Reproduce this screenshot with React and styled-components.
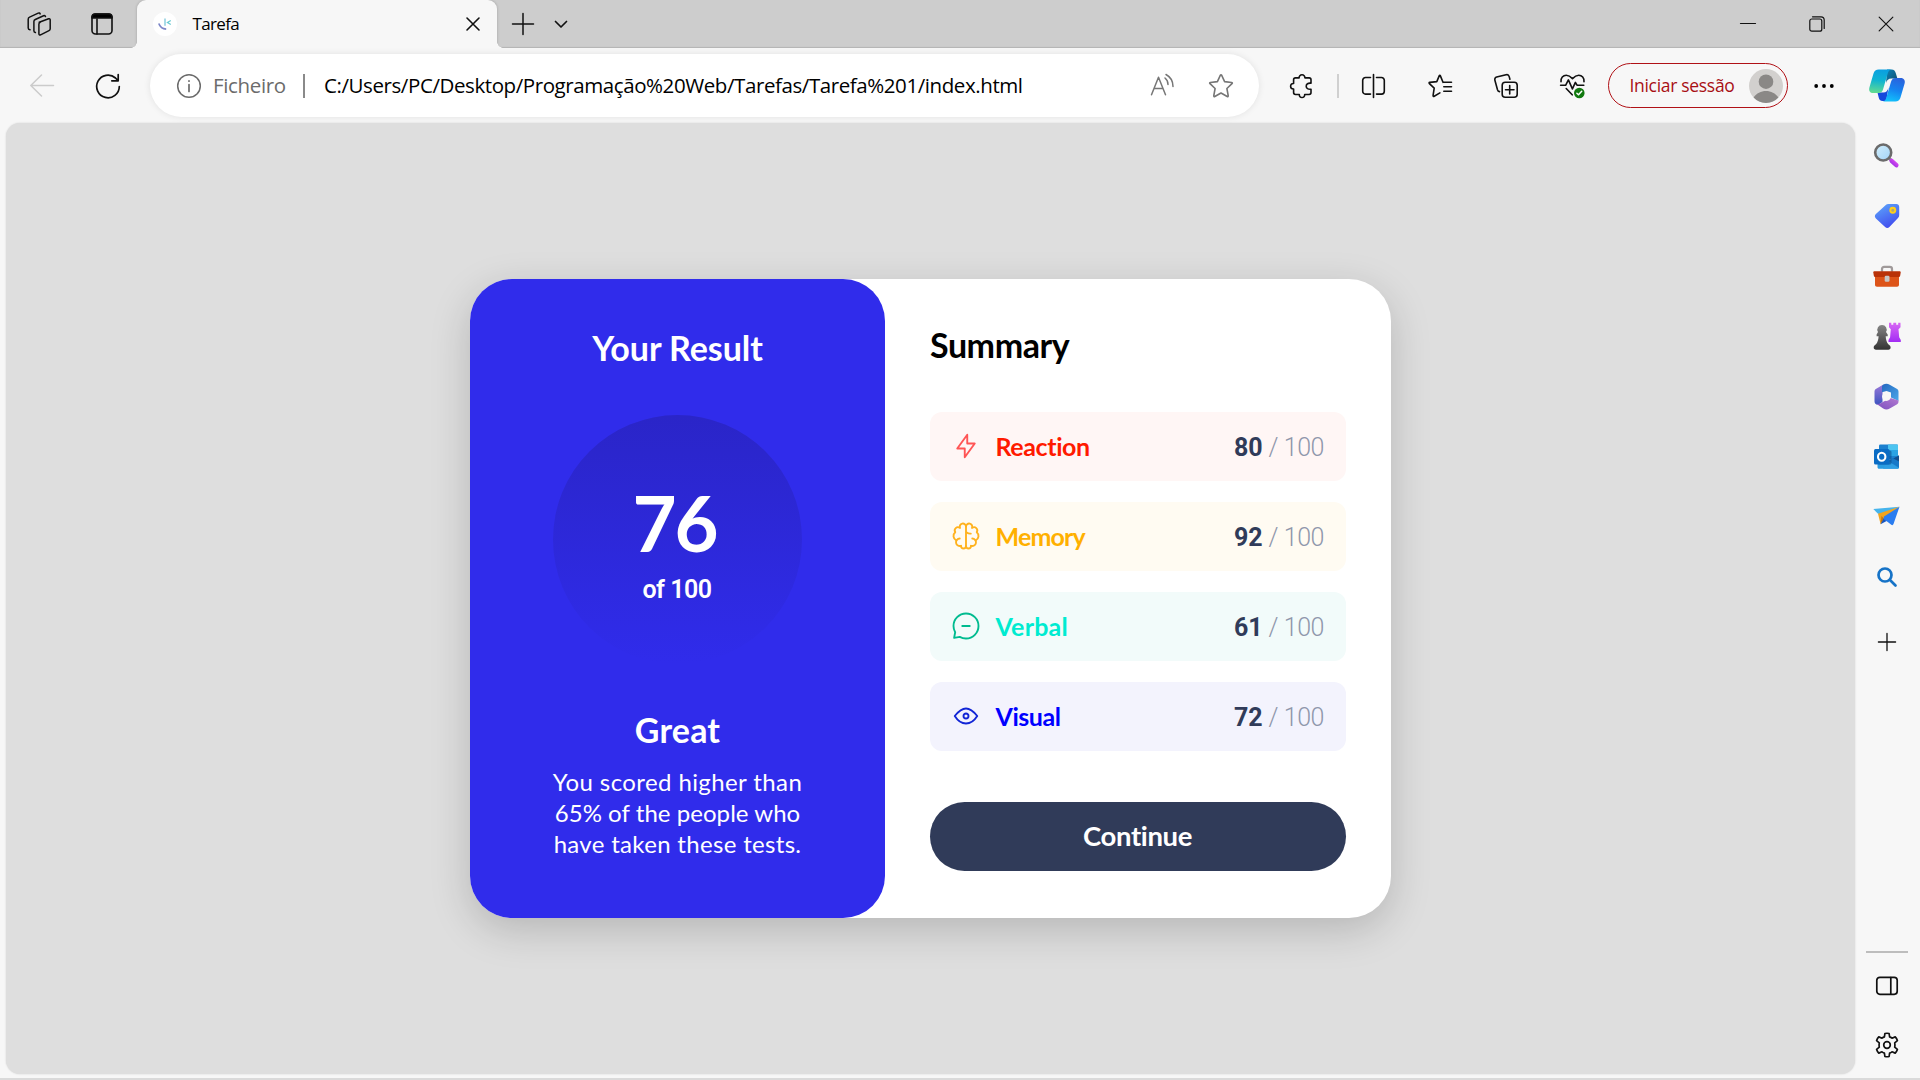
import React from 'react';
import styled, { createGlobalStyle } from 'styled-components';

const GlobalStyle = createGlobalStyle`
  *, *::before, *::after { box-sizing: border-box; }
  body { margin: 0; background: #f7f7f7; overflow: hidden; }
  h1, h2, p, ul { margin: 0; padding: 0; }
  svg { display: block; flex: none; overflow: visible; }
`;

const Browser = styled.div`
  width: 1920px;
  height: 1080px;
  display: flex;
  flex-direction: column;
  background: #f7f7f7;
  border-bottom: 2px solid #dadada;
  font-family: 'Open Sans', 'Noto Sans', sans-serif;
  color: #000;
`;

/* ---------- tab strip ---------- */

const TabStrip = styled.header`
  height: 48px;
  flex: none;
  display: flex;
  align-items: center;
  padding-left: 7.5px;
  background: #cdcdcd;
  box-shadow: inset 0 -1px 1px #b4b4b4;
`;

const Slot = styled.div`
  width: ${(p) => p.$w}px;
  flex: none;
  display: flex;
  justify-content: center;
  align-items: center;
  padding-bottom: ${(p) => p.$lift || 0}px;
`;

const Tab = styled.div`
  position: relative;
  width: 360px;
  height: 48px;
  margin: 0 7px 0 3px;
  padding: 0 16.5px 0 16px;
  display: flex;
  align-items: center;
  background: #f7f7f7;
  border-radius: 9px 9px 0 0;
  box-shadow: 0 0 3px rgba(0, 0, 0, 0.22);
  clip-path: inset(0 -7px 0 -7px);

  &::before,
  &::after {
    content: '';
    position: absolute;
    bottom: 0;
    width: 6px;
    height: 6px;
  }
  &::before {
    left: -6px;
    background: radial-gradient(circle at 0 0, transparent 5.5px, #f7f7f7 6px);
  }
  &::after {
    right: -6px;
    background: radial-gradient(circle at 100% 0, transparent 5.5px, #f7f7f7 6px);
  }
`;

const Favicon = styled.span`
  width: 24px;
  height: 24px;
  margin-right: 16px;
  border-radius: 50%;
  background: #fff;
`;

const TabTitle = styled.span`
  flex: 1;
  padding-bottom: 2px;
  font-size: 17px;
  letter-spacing: -0.65px;
`;

const Spacer = styled.div`
  flex: 1;
`;

/* ---------- toolbar ---------- */

const Toolbar = styled.nav`
  height: 74px;
  flex: none;
  display: flex;
  align-items: center;
  padding: 1px 0 0 9px;
`;

const AddressBar = styled.div`
  width: 1109px;
  height: 63px;
  margin: 0 9px;
  padding: 0 26px 0 27px;
  display: flex;
  align-items: center;
  border-radius: 32px;
  background: #fff;
  box-shadow: 0 0 7px rgba(0, 0, 0, 0.09);
  font-size: 20.5px;
  line-height: 30px;
`;

const Scheme = styled.span`
  width: 89px;
  margin-left: 12px;
  margin-right: 1px;
  padding-bottom: 2px;
  color: #6b6b6b;
  letter-spacing: -0.35px;
`;

const Separator = styled.span`
  width: 2px;
  height: 24px;
  flex: none;
  margin-right: ${(p) => p.$after}px;
  margin-left: ${(p) => p.$before || 0}px;
  background: ${(p) => p.$color};
`;

const Url = styled.span`
  flex: 1;
  padding-bottom: 2px;
  letter-spacing: -0.415px;
  white-space: nowrap;
`;

const AddressActions = styled.div`
  display: flex;
  gap: 34px;
`;

const SignIn = styled.div`
  width: 180px;
  height: 45px;
  margin: 0 3px;
  padding: 0 4px 0 20.5px;
  display: flex;
  align-items: center;
  justify-content: space-between;
  border: 1.5px solid #b01116;
  border-radius: 23px;
  color: #a80f14;
  font-size: 17.5px;
  letter-spacing: -0.31px;
  white-space: nowrap;
`;

const SignInLabel = styled.span`
  padding-bottom: 1px;
`;

/* ---------- body ---------- */

const Body = styled.div`
  flex: 1;
  min-height: 0;
  display: flex;
  padding: 1px 0 0 6px;
`;

const Viewport = styled.main`
  width: 1848.5px;
  height: 951px;
  flex: none;
  padding: 156px 0 0 464px;
  border-radius: 14px;
  background: #dedede;
  box-shadow: 0 0 2px rgba(0, 0, 0, 0.16);
`;

const Sidebar = styled.aside`
  width: 64px;
  display: flex;
  flex-direction: column;
  align-items: center;
  padding: 2.8px 0 3px 0;
`;

const SideItem = styled.div`
  width: 63px;
  height: ${(p) => p.$h || 60.1}px;
  margin-top: ${(p) => p.$top || 0}px;
  flex: none;
  display: flex;
  align-items: center;
  justify-content: center;
`;

const SideRule = styled.div`
  width: 42px;
  height: 2px;
  margin: auto 0 3px;
  background: #bdbdbd;
`;

/* ---------- result card ---------- */

const Card = styled.section`
  width: 921px;
  height: 639px;
  display: flex;
  border-radius: 42px;
  background: #fff;
  box-shadow: 0 12px 40px rgba(0, 0, 0, 0.18);
  font-family: Lato, sans-serif;
`;

const ResultPane = styled.div`
  width: 415px;
  padding-top: 48px;
  display: flex;
  flex-direction: column;
  align-items: center;
  border-radius: 42px;
  background: #302ceb;
  color: #fff;
`;

const Heading = styled.h1`
  font-size: 34px;
  line-height: 41px;
  font-weight: 700;
  letter-spacing: ${(p) => p.$track || 0}px;
`;

const ScoreCircle = styled.div`
  width: 249px;
  height: 249px;
  margin: 47px 0 45px;
  padding-top: 70px;
  display: flex;
  flex-direction: column;
  align-items: center;
  border-radius: 50%;
  background: linear-gradient(#2a25c8, #302ceb);
`;

const BigScore = styled.strong`
  padding-right: 6px;
  font-size: 76px;
  line-height: 76px;
  font-weight: 700;
  letter-spacing: -2px;
`;

const OutOf = styled.span`
  margin-top: 14px;
  padding-right: 1px;
  font: 600 25px/30px Roboto, sans-serif;
  letter-spacing: -0.5px;
`;

const Verdict = styled.p`
  margin-top: 16px;
  font-size: 24px;
  line-height: 31px;
  text-align: center;
`;

const Line = styled.span`
  display: block;
  letter-spacing: ${(p) => p.$track}px;
`;

const SummaryPane = styled.div`
  width: 416px;
  margin-left: 45px;
  padding-top: 45px;
`;

const Rows = styled.ul`
  margin-top: 47px;
  display: flex;
  flex-direction: column;
  gap: 21px;
  list-style: none;
`;

const Row = styled.li`
  height: 69px;
  padding: 0 22px 0 21px;
  display: flex;
  align-items: center;
  border-radius: 12px;
  background: ${(p) => p.$bg};

  svg {
    margin-bottom: 1px;
  }
`;

const RowLabel = styled.span`
  flex: 1;
  margin-left: 14.5px;
  padding-bottom: 1px;
  font-size: 25px;
  line-height: 30px;
  font-weight: 700;
  font-variant-ligatures: none;
  letter-spacing: ${(p) => p.$track}px;
  color: ${(p) => p.$color};
`;

const RowScore = styled.span`
  padding-top: 3px;
  font: 300 25px/30px Roboto, sans-serif;
  letter-spacing: -0.45px;
  color: #8f97ab;

  b {
    margin-right: 6px;
    font-weight: 700;
    letter-spacing: 0;
    color: #303b59;
  }
`;

const Continue = styled.button`
  width: 416px;
  height: 69px;
  margin-top: 51px;
  padding: 0 1px 1px 0;
  border: 0;
  border-radius: 35px;
  background: #303b59;
  color: #fff;
  font: 700 27.5px/34px Lato, sans-serif;
  letter-spacing: -0.36px;
`;

/* ---------- icons ---------- */

const Stroke = ({ size = 24, box = 24, w = 1.5, color = '#111', children }) => (
  <svg width={size} height={size} viewBox={`0 0 ${box} ${box}`} fill="none" stroke={color} strokeWidth={w} strokeLinecap="round" strokeLinejoin="round">
    {children}
  </svg>
);

const WorkspacesIcon = () => (
  <Stroke>
    <path d="M12.2 10.2 21.6 6.8c.9-.3 1.6.1 1.6 1v9c0 .8-.4 1.4-1.2 1.8l-8.4 4.2c-1 .4-1.7 0-1.7-1v-9.600c0-.9.4-1.600 1.300-2z" />
    <path d="M8.400 20.600c-1-.2-1.500-.8-1.500-1.800V9.600c0-.9.5-1.700 1.400-2.100l8.200-3.700c1-.4 1.700-.1 2 .8" />
    <path d="M3 17.800C1.800 17.500 1.200 16.900 1.200 15.900V7.200c0-.9.5-1.700 1.400-2.100l8.600-4c1-.4 1.700-.1 2 .8" />
  </Stroke>
);

const TabActionsIcon = () => (
  <Stroke size={22} box={22} w={1.6}>
    <rect x="1" y="1" width="20" height="20" rx="3.500" />
    <path d="M1 5V4a3 3 0 0 1 3-3h14a3 3 0 0 1 3 3v1z" fill="#000" />
    <path d="M6 6v15" />
  </Stroke>
);

const FaviconArt = () => (
  <svg width="24" height="24" viewBox="0 0 24 24" fill="none">
    <path d="M5.800 11.500c1.200 3.400 4 5.400 7.400 5.600" stroke="#7c86c8" strokeWidth="1.700" />
    <path d="M12 6.500v7.200" stroke="#8ccfe0" strokeWidth="1.500" />
    <path d="m17.800 8.500-3.300 2 3.300 2" stroke="#6ccbd2" strokeWidth="1.300" />
  </svg>
);

const CloseIcon = ({ size, w }) => (
  <Stroke size={size} box={14} w={w}><path d="m1 1 12 12M13 1 1 13" /></Stroke>
);

const PlusIcon = ({ size, w = 1.5 }) => (
  <Stroke size={size} box={22} w={w}><path d="M11 .5v21M.5 11h21" /></Stroke>
);

const PuzzleIcon = () => (
  <Stroke w={1.600}>
    <path d="M6.500 3.900H10.100C10 2.100 11.200.8 13 .8s3 1.300 2.900 3.100h4.200c1.100 0 1.900.8 1.900 1.900v3.400c-2.900-.4-4.800.9-4.800 3s1.900 3.400 4.800 3v3.400c0 1.100-.8 1.900-1.900 1.900h-4.400c.1 1.800-1 3-2.700 3s-2.800-1.200-2.700-3H6.500c-1.100 0-1.900-.8-1.900-1.900v-3.600C2.800 15 1.600 13.900 1.600 12.200s1.200-2.900 3-2.700V5.800c0-1.100.8-1.900 1.900-1.900Z" />
  </Stroke>
);

const SplitIcon = () => (
  <Stroke w={1.600}>
    <path d="M8.500 3.500h-5A2.800 2.800 0 0 0 .7 6.300v11A2.800 2.800 0 0 0 3.500 20.100h5M14.500 3.500h5a2.800 2.800 0 0 1 2.800 2.800v11a2.800 2.800 0 0 1-2.800 2.800h-5M11.500 .5v23" />
  </Stroke>
);

const FavoritesIcon = () => (
  <Stroke w={1.600}>
    <path d="M15.800 8.300h7.700M15.800 12.800h7.700M15.800 17.300h7.700M15 8.300l-2.600-6.400c-.3-.7-.9-.7-1.200 0L8.800 7.600l-7 .8c-.8.1-1 .7-.4 1.200l4.800 4.500-1.100 7.300c-.1.800.4 1.200 1.100.8l5.700-3.300" />
  </Stroke>
);

const CollectionsIcon = () => (
  <Stroke w={1.600}>
    <rect x="8.200" y="8.200" width="15" height="15" rx="3" />
    <path d="M15.700 11.500v8.500M11.500 15.700H20M5.500 17.600c-1-.2-1.700-.9-2-1.900L.9 6.200c-.4-1.500.3-2.700 1.800-3.100L12 .8c1.500-.4 2.800.4 3.200 1.800l.7 2.600" />
  </Stroke>
);

const HealthIcon = () => (
  <svg width="25" height="25" viewBox="0 0 25 25" fill="none" stroke="#111" strokeWidth="1.600" strokeLinecap="round" strokeLinejoin="round">
    <path d="M1 8.700C.7 5 3 2.200 6.300 2.200c2.600 0 4.300 1.400 6.200 3.400 1.900-2 3.600-3.400 6.200-3.400 3.300 0 5.600 2.800 5.300 6.500" />
    <path d="M.6 12.300h5l2.800-5.400 4 9 3-6.500 1.800 2.900h6.600" />
    <path d="m6.200 15.500 6 6.300" />
    <circle cx="19.300" cy="20" r="5.300" fill="#11790f" stroke="none" />
    <path d="m16.900 20.200 1.600 1.500 3.200-3.400" stroke="#fff" strokeWidth="1.500" />
  </svg>
);

const Avatar = () => (
  <svg width="34" height="34" viewBox="0 0 34 34">
    <circle cx="17" cy="17" r="17" fill="#d2d0ce" />
    <circle cx="17" cy="12.700" r="7.300" fill="#8a8886" />
    <path d="M4.600 28.600C7.500 24.300 12 22 17 22s9.500 2.300 12.400 6.600A17 17 0 0 1 17 34a17 17 0 0 1-12.400-5.400z" fill="#8a8886" />
  </svg>
);

const CopilotIcon = () => (
  <svg width="36" height="33" viewBox="0 0 36 33">
    <defs>
      <linearGradient id="cpA" x1=".4" y1="0" x2=".3" y2="1"><stop offset="0" stopColor="#0a9fe0" /><stop offset=".45" stopColor="#0fb3d2" /><stop offset="1" stopColor="#63dc90" /></linearGradient>
      <linearGradient id="cpB" x1=".7" y1="0" x2=".4" y2="1"><stop offset="0" stopColor="#2a62dc" /><stop offset=".5" stopColor="#1683f0" /><stop offset="1" stopColor="#12c0fb" /></linearGradient>
      <linearGradient id="cpC" x1="0" y1="0" x2="1" y2="1"><stop offset="0" stopColor="#0c84ba" /><stop offset="1" stopColor="#124a68" /></linearGradient>
    </defs>
    <path d="M18 .5h4.500c2.600 0 3.700 1.700 4.300 3.700l1.600 5.300h-6c-3 0-4.500 1.500-5.400 4.500z" fill="url(#cpC)" />
    <path d="M8.500 23.500h5.800c3 0 4.500-2 5.200-5l-2.300 13.500h-3.500c-2.600 0-3.400-1.500-4-3.600z" fill="#1648dc" />
    <path d="M9.800.5h12.500c-2 .4-2.900 1.700-3.600 4l-4.600 15.700c-.8 2.500-2 3.800-4.500 3.800H4.300C1 24-.5 21.500.4 18.400L4.500 4.600C5.300 2 7 .5 9.800.5Z" fill="url(#cpA)" />
    <path d="M26.300 32.500H13.800c2-.4 2.900-1.700 3.600-4L22 12.800C22.800 10.300 24 9 26.500 9h5.200c3.300 0 4.800 2.500 3.900 5.600l-4.100 13.800c-.8 2.600-2.400 4.100-5.200 4.100Z" fill="url(#cpB)" />
  </svg>
);

const SearchEmoji = () => (
  <svg width="26" height="26" viewBox="0 0 26 26">
    <defs>
      <linearGradient id="seLens" x1="0" y1="0" x2="1" y2="1"><stop offset="0" stopColor="#d2eefc" /><stop offset="1" stopColor="#a2d4f6" /></linearGradient>
      <linearGradient id="seGrip" x1="0" y1="1" x2="1" y2="0"><stop offset="0" stopColor="#9a2ee0" /><stop offset="1" stopColor="#e04cf4" /></linearGradient>
    </defs>
    <path d="m14.500 14.500 3 3" stroke="#8a8a8a" strokeWidth="3" />
    <circle cx="9.200" cy="9.500" r="8" fill="url(#seLens)" stroke="#6b6b6b" strokeWidth="2.600" />
    <path d="m17.600 17.800 4.800 4.400" stroke="url(#seGrip)" strokeWidth="4.400" strokeLinecap="round" />
  </svg>
);

const TagEmoji = () => (
  <svg width="26" height="26" viewBox="0 0 26 26">
    <defs><linearGradient id="tg" x1=".2" y1="0" x2=".7" y2="1"><stop offset="0" stopColor="#5ca4fa" /><stop offset="1" stopColor="#4048ee" /></linearGradient></defs>
    <path d="M14.500 1h7.700c1.900 0 3 1.100 3 3v8c0 1.200-.4 2.200-1.200 3l-8.600 9c-1.300 1.300-3 1.300-4.300 0l-9.200-8.600c-1.400-1.300-1.400-3 0-4.300L11.500 2.200C12.300 1.400 13.300 1 14.500 1Z" fill="url(#tg)" />
    <circle cx="18.800" cy="7.200" r="2.500" fill="#b3a870" stroke="#ffcf1b" strokeWidth="1.900" />
  </svg>
);

const ToolboxEmoji = () => (
  <svg width="28" height="22" viewBox="0 -.7 28 22">
    <path d="M9 6V3.400C9 2 9.800 1.200 11.200 1.200h5.600C18.200 1.200 19 2 19 3.400V6" fill="none" stroke="#a09a9a" strokeWidth="2.200" />
    <path d="M2 9h24v10c0 1.300-.8 2-2 2H4c-1.200 0-2-.7-2-2z" fill="#dd5419" />
    <path d="M1.500 5.500h25c.8 0 1.200.5 1.200 1.200l-.5 3.100c-.2 1-.8 1.500-1.800 1.500H2.600c-1 0-1.600-.5-1.800-1.500L.3 6.700c0-.7.4-1.200 1.200-1.200Z" fill="#b93208" />
    <rect x="11.700" y="10" width="4.800" height="6" rx="1.300" fill="#c6c6c6" />
  </svg>
);

const ChessEmoji = () => (
  <svg width="28" height="28" viewBox="0 0 28 28">
    <defs>
      <linearGradient id="chP" x1="0" y1="0" x2="0" y2="1"><stop offset="0" stopColor="#858585" /><stop offset="1" stopColor="#333" /></linearGradient>
      <linearGradient id="chR" x1="0" y1="0" x2="0" y2="1"><stop offset="0" stopColor="#d868f4" /><stop offset="1" stopColor="#a22cf4" /></linearGradient>
    </defs>
    <path d="M16 .8h2.300v2h2v-2h2.900v2h2v-2h2.300v4.500l-2 2 .7 8 1.600 2.800v2H15.500v-2l1.600-2.800.7-8-1.800-2z" fill="url(#chR)" />
    <path d="M9 3a4.600 4.600 0 0 1 4 7l1.700 2.400v1.800h-2c.2 3.600 1 6 2.600 8 1.500.8 2.300 1.800 2.300 3.300 0 1.400-.8 2.200-2.200 2.200H3C1.600 27.700.7 26.900.7 25.500c0-1.500.8-2.500 2.300-3.300 1.600-2 2.400-4.400 2.600-8h-2v-1.800L5 10A4.600 4.600 0 0 1 9 3Z" fill="url(#chP)" />
  </svg>
);

const M365Icon = () => (
  <svg width="25" height="27" viewBox="0 0 25 27">
    <defs>
      <linearGradient id="mA" x1="0" y1="0" x2="0" y2="1"><stop offset="0" stopColor="#9a78d8" /><stop offset="1" stopColor="#3c54c0" /></linearGradient>
      <linearGradient id="mB" x1="0" y1="0" x2="1" y2="1"><stop offset="0" stopColor="#2468c0" /><stop offset="1" stopColor="#4aa8ea" /></linearGradient>
      <linearGradient id="mC" x1="0" y1="1" x2="1" y2="0"><stop offset="0" stopColor="#7a50c0" /><stop offset="1" stopColor="#b47ad0" /></linearGradient>
    </defs>
    <path d="M9 1.800 2.200 5.700C1 6.400.5 7.300.5 8.700v9.500c0 2.500 2 4 4.300 3.200L8.500 19V9l3.500-7z" fill="url(#mA)" />
    <path d="M9 1.800c2.300-1.400 4.400-1.500 6.700-.1l7 4c1.200.7 1.800 1.700 1.800 3v9.400L17 14.400V9.600L12.500 8 8 9.200V4.500c0-1.200.2-2 1-2.700Z" fill="url(#mB)" />
    <path d="M2 20.500c2 .9 3.500.3 5-.6l9.500-5 8 2.500v1c0 1.400-.6 2.300-1.800 3l-7 4.100c-2.200 1.300-4.300 1.300-6.500 0z" fill="url(#mC)" />
    <circle cx="12.500" cy="13.500" r="4.400" fill="#f7f7f7" />
  </svg>
);

const OutlookIcon = () => (
  <svg width="25" height="25" viewBox="0 0 25 25">
    <rect x="5" y=".5" width="19" height="15" rx="1.300" fill="#1b80cf" />
    <path d="M14 .5h9c.6 0 1 .4 1 1V6H14z" fill="#4cc4f0" />
    <path d="M5 6h10v6H5z" fill="#1070bf" />
    <path d="M15 6h9v6h-9z" fill="#2ba3e4" />
    <path d="M3.500 11.500 14 17l11-5.500v12c0 .8-.5 1.300-1.300 1.300H5c-.9 0-1.500-.6-1.500-1.500z" fill="#2a9ce2" />
    <path d="m14 17 11 6.700V11.500z" fill="#1678c8" />
    <path d="m14 17 5-2.700 6 3.300v-6z" fill="#124f90" />
    <path d="m14 17 10.500 7.700H9z" fill="#2f9ee3" />
    <rect x="4" y="6.500" width="13.500" height="14" rx="1.500" fill="#0b4a88" opacity=".55" />
    <rect x="0" y="5" width="15.500" height="15.500" rx="1.500" fill="#0a6cc4" />
    <ellipse cx="7.700" cy="12.700" rx="3.700" ry="4" fill="none" stroke="#fff" strokeWidth="2.100" />
  </svg>
);

const PlaneIcon = () => (
  <svg width="27" height="20" viewBox="0 0 27 20">
    <path d="M.3 2.900 26.500.7 8 8.800 5 7.700z" fill="#46b4ec" />
    <path d="M5 7.700 26.500.7 11 12.500 7.600 18.200z" fill="#f2a41c" />
    <path d="M7.600 18.200 8.500 10 11 12.800z" fill="#c07416" />
    <path d="M11 10.500 26.500.7 20.500 18c-.4 1.200-1.200 1.500-2.200.8l-7.800-6z" fill="#2a7df0" />
    <path d="m7.600 18.200 3-5.600 3 2.300z" fill="#1656c2" />
  </svg>
);

const GearIcon = () => (
  <Stroke size={26} box={26} w={1.700}>
    <circle cx="13" cy="13" r="3.300" />
    <path d="M10.900 1.500q2.100-.5 4.200 0l.5 3.400q1.300.4 2.400 1.300l3.200-1.300q1.500 1.600 2.200 3.700L20.700 10.800q.2.700.2 2.200t-.2 2.200l2.700 2.200q-.7 2.100-2.200 3.700L18 19.800q-1.100.9-2.400 1.300l-.5 3.400q-2.100.5-4.200 0l-.5-3.400q-1.300-.4-2.400-1.300L4.800 21.100Q3.300 19.500 2.600 17.400L5.300 15.200Q5.100 14.500 5.100 13t.2-2.200L2.600 8.600Q3.300 6.500 4.800 4.900L8 6.200Q9.100 5.300 10.400 4.900z" />
  </Stroke>
);

const skillIcons = {
  reaction: (
    <Stroke size={30} box={20} w={1.250} color="#f55">
      <path d="M10.833 8.333V2.500l-6.666 9.167h5V17.500l6.666-9.167h-5Z" />
    </Stroke>
  ),
  memory: (
    <Stroke size={30} box={20} w={1.250} color="#ffb21e">
      <path d="M5.833 11.667a2.500 2.500 0 1 0 .834 4.858" />
      <path d="M3.553 13.004a3.333 3.333 0 0 1-.728-5.530m.025-.067a2.083 2.083 0 0 1 2.983-2.824m.199.054A2.083 2.083 0 1 1 10 3.750v12.917a1.667 1.667 0 0 1-3.333 0M14.167 11.667a2.500 2.500 0 1 1-.834 4.858" />
      <path d="M16.447 13.004a3.334 3.334 0 0 0 .728-5.530m-.025-.067a2.083 2.083 0 0 0-2.983-2.824M10 3.750a2.085 2.085 0 0 1 2.538-2.033 2.084 2.084 0 0 1 1.430 2.920m-.635 12.030a1.667 1.667 0 0 1-3.333 0M10.500 7.700c1 .7 1.700.9 2.700.7" />
    </Stroke>
  ),
  verbal: (
    <Stroke size={30} box={20} w={1.250} color="#00bb8f">
      <path d="M7.500 10h5M10 18.333A8.333 8.333 0 1 0 1.667 10c0 1.518.406 2.942 1.115 4.167l-.699 3.750 3.750-.699A8.295 8.295 0 0 0 10 18.333Z" />
    </Stroke>
  ),
  visual: (
    <Stroke size={30} box={20} w={1.250} color="#1125d6">
      <path d="M10 11.667a1.667 1.667 0 1 0 0-3.334 1.667 1.667 0 0 0 0 3.334Z" />
      <path d="M17.500 10c-1.574 2.492-4.402 5-7.500 5s-5.926-2.508-7.500-5C4.416 7.632 6.660 5 10 5s5.584 2.632 7.500 5Z" />
    </Stroke>
  ),
};

const skills = [
  { id: 'reaction', label: 'Reaction', score: 80, bg: '#fff6f5', color: '#ff1a00', track: -0.4 },
  { id: 'memory', label: 'Memory', score: 92, bg: '#fffbf2', color: '#ffb000', track: -0.85 },
  { id: 'verbal', label: 'Verbal', score: 61, bg: '#f2fbfa', color: '#00ebd0', track: 0.2 },
  { id: 'visual', label: 'Visual', score: 72, bg: '#f3f3fd', color: '#0000ff', track: -0.45 },
];

export default function App() {
  return (
    <Browser>
      <GlobalStyle />
      <TabStrip>
        <Slot $w={63}><WorkspacesIcon /></Slot>
        <Slot $w={63}><TabActionsIcon /></Slot>
        <Tab>
          <Favicon><FaviconArt /></Favicon>
          <TabTitle>Tarefa</TabTitle>
          <CloseIcon size={14} w={1.6} />
        </Tab>
        <Slot $w={38} $lift={1}><PlusIcon size={22} /></Slot>
        <Slot $w={38}>
          <Stroke size={14} box={14} w={1.7}><path d="m1.500 4.500 5.500 5.500 5.500-5.500" /></Stroke>
        </Slot>
        <Spacer />
        <Slot $w={69} $lift={2}><Stroke size={16} box={16} w={1.2}><path d="M.5 8.500h15" /></Stroke></Slot>
        <Slot $w={69} $lift={1}>
          <Stroke size={16} box={16} w={1.2}>
            <rect x=".8" y="3" width="12" height="12.200" rx="2" />
            <path d="M3.500.8H12a3.200 3.200 0 0 1 3.200 3.200v8.500" />
          </Stroke>
        </Slot>
        <Slot $w={69} $lift={1}><CloseIcon size={16} w={1} /></Slot>
      </TabStrip>

      <Toolbar>
        <Slot $w={66}>
          <Stroke color="#cbcbcb"><path d="M23.500 11.500H.8M11.500 1 .8 11.500 11.500 22" /></Stroke>
        </Slot>
        <Slot $w={66}>
          <Stroke w={1.700}>
            <path d="M23.300 12.500A11.300 11.300 0 1 1 19.500 4L22 6.600M22.200.5v6.300h-6.400" />
          </Stroke>
        </Slot>
        <AddressBar>
          <Stroke color="#6b6b6b">
            <circle cx="12" cy="12" r="11.300" />
            <path d="M12 10.500V17.500M12 6.800v.4" strokeWidth="1.700" />
          </Stroke>
          <Scheme>Ficheiro</Scheme>
          <Separator $color="#8a8a8a" $after={19} />
          <Url>C:/Users/PC/Desktop/Programação%20Web/Tarefas/Tarefa%201/index.html</Url>
          <AddressActions>
            <Stroke color="#767676">
              <path d="m.5 20.700 7-17.500 7 17.500M3 14.500h9M14 4c2 1.600 3 3.800 3 6.500M15 .5c4.600 2.500 7 6.600 7 12" />
            </Stroke>
            <Stroke color="#767676" w={1.600}>
              <path d="M11.400 1.200c.3-.6.900-.6 1.200 0l3 6.400 7 .9c.8.1 1 .7.400 1.200l-5.100 4.800 1.300 7.200c.1.800-.4 1.100-1 .8L12 19l-6.200 3.500c-.6.3-1.100 0-1-.8l1.300-7.200L1 9.700c-.6-.5-.4-1.100.4-1.200l7-.9z" />
            </Stroke>
          </AddressActions>
        </AddressBar>
        <Slot $w={66}><PuzzleIcon /></Slot>
        <Separator $color="#d0d0d0" $before={3} $after={2} />
        <Slot $w={66}><SplitIcon /></Slot>
        <Slot $w={66}><FavoritesIcon /></Slot>
        <Slot $w={66}><CollectionsIcon /></Slot>
        <Slot $w={66}><HealthIcon /></Slot>
        <SignIn>
          <SignInLabel>Iniciar sessão</SignInLabel>
          <Avatar />
        </SignIn>
        <Slot $w={66}>
          <svg width="20" height="6" viewBox="0 0 20 6">
            <circle cx="2.200" cy="3" r="1.900" /><circle cx="10" cy="3" r="1.900" /><circle cx="17.800" cy="3" r="1.900" />
          </svg>
        </Slot>
        <Slot $w={60}><CopilotIcon /></Slot>
      </Toolbar>

      <Body>
        <Viewport>
          <Card>
            <ResultPane>
              <Heading $track={-0.05}>Your Result</Heading>
              <ScoreCircle>
                <BigScore>76</BigScore>
                <OutOf>of 100</OutOf>
              </ScoreCircle>
              <Heading $track={0.2}>Great</Heading>
              <Verdict>
                <Line $track={0.4}>You scored higher than</Line>
                <Line $track={0.05}>65% of the people who</Line>
                <Line $track={0.32}>have taken these tests.</Line>
              </Verdict>
            </ResultPane>
            <SummaryPane>
              <Heading as="h2" $track={-0.45}>Summary</Heading>
              <Rows>
                {skills.map((s) => (
                  <Row key={s.id} $bg={s.bg}>
                    {skillIcons[s.id]}
                    <RowLabel $color={s.color} $track={s.track}>{s.label}</RowLabel>
                    <RowScore><b>{s.score}</b>/ 100</RowScore>
                  </Row>
                ))}
              </Rows>
              <Continue>Continue</Continue>
            </SummaryPane>
          </Card>
        </Viewport>
        <Sidebar>
          <SideItem><SearchEmoji /></SideItem>
          <SideItem><TagEmoji /></SideItem>
          <SideItem><ToolboxEmoji /></SideItem>
          <SideItem><ChessEmoji /></SideItem>
          <SideItem><M365Icon /></SideItem>
          <SideItem><OutlookIcon /></SideItem>
          <SideItem><PlaneIcon /></SideItem>
          <SideItem>
            <Stroke size={20} box={20} w={2.700} color="#1673c7">
              <circle cx="8" cy="8" r="6.500" /><path d="m13 13 5.500 5.500" />
            </Stroke>
          </SideItem>
          <SideItem $top={5}><PlusIcon size={18} w={1.6} /></SideItem>
          <SideRule />
          <SideItem $h={59.5}>
            <Stroke size={22} box={22} w={1.700}>
              <rect x=".8" y="2.300" width="20.400" height="17" rx="3" /><path d="M14.800 2.500v16.600" />
            </Stroke>
          </SideItem>
          <SideItem $h={59.5}><GearIcon /></SideItem>
        </Sidebar>
      </Body>
    </Browser>
  );
}
